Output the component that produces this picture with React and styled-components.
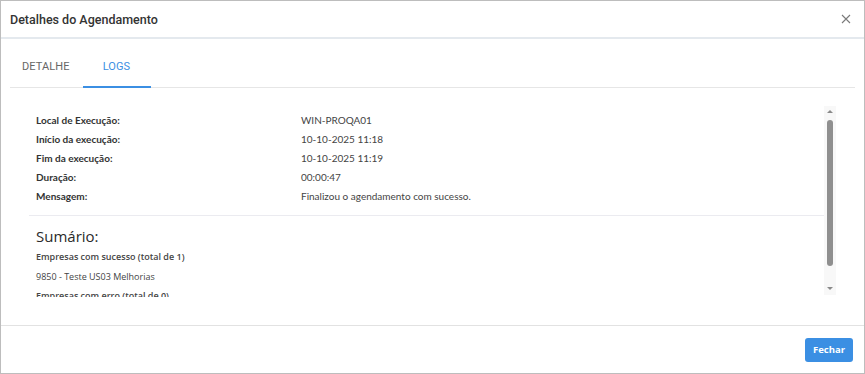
import React, { useState } from "react";
import styled, { createGlobalStyle } from "styled-components";

const GlobalStyle = createGlobalStyle`
  html, body {
    margin: 0;
    padding: 0;
    background: #ffffff;
  }
  * {
    box-sizing: border-box;
  }
`;

const infoRows = [
  { label: "Local de Execução:", value: "WIN-PROQA01" },
  { label: "Início da execução:", value: "10-10-2025 11:18" },
  { label: "Fim da execução:", value: "10-10-2025 11:19" },
  { label: "Duração:", value: "00:00:47" },
  { label: "Mensagem:", value: "Finalizou o agendamento com sucesso." },
];

const summary = [
  { text: "Empresas com sucesso (total de 1)", strong: true },
  { text: "9850 - Teste US03 Melhorias" },
  { text: "Empresas com erro (total de 0)", strong: true },
];

const tabs = [
  { key: "detalhe", label: "DETALHE", pad: "0 13px 0 12px" },
  { key: "logs", label: "LOGS", pad: "0 21px 0 20px" },
];

const App = () => {
  const [active, setActive] = useState("logs");

  return (
    <>
      <GlobalStyle />
      <Modal>
        <Header>
          <Title>Detalhes do Agendamento</Title>
          <CloseButton aria-label="Fechar">
            <svg width="10" height="10" viewBox="0 0 10 10">
              <path d="M1 1 L9 9 M9 1 L1 9" stroke="#7a7a7a" strokeWidth="1.1" fill="none" />
            </svg>
          </CloseButton>
        </Header>

        <TabBar>
          {tabs.map((t) => (
            <Tab
              key={t.key}
              $active={active === t.key}
              $pad={t.pad}
              onClick={() => setActive(t.key)}
            >
              {t.label}
            </Tab>
          ))}
        </TabBar>

        <Body>
          <ScrollPane>
            <Content>
              <InfoList>
                {infoRows.map((r) => (
                  <InfoRow key={r.label}>
                    <Label>{r.label}</Label>
                    <Value>{r.value}</Value>
                  </InfoRow>
                ))}
              </InfoList>
              <Divider />
              <Summary>
                <SummaryTitle>Sumário:</SummaryTitle>
                {summary.map((s) => (
                  <SummaryLine key={s.text} $strong={s.strong}>
                    {s.text}
                  </SummaryLine>
                ))}
              </Summary>
            </Content>
            <ScrollTrack>
              <Arrow $dir="up" />
              <Thumb />
              <Arrow $dir="down" />
            </ScrollTrack>
          </ScrollPane>
        </Body>

        <Footer>
          <PrimaryButton>Fechar</PrimaryButton>
        </Footer>
      </Modal>
    </>
  );
};

const Modal = styled.div`
  width: 865px;
  height: 374px;
  border: 1px solid #bdbdbd;
  background: #fff;
  display: flex;
  flex-direction: column;
  overflow: hidden;
`;

const Header = styled.div`
  height: 38px;
  border-bottom: 2px solid #e4e9ee;
  display: flex;
  align-items: center;
  justify-content: space-between;
  padding: 0 12px 0 9px;
`;

const Title = styled.span`
  font-family: Roboto, "Liberation Sans", sans-serif;
  font-size: 12.5px;
  font-weight: 500;
  color: #333;
`;

const CloseButton = styled.button`
  border: none;
  background: transparent;
  padding: 0;
  width: 12px;
  height: 12px;
  display: flex;
  align-items: center;
  justify-content: center;
  cursor: pointer;
`;

const TabBar = styled.div`
  margin: 8px 9px 0;
  height: 41px;
  display: flex;
  border-bottom: 1px solid #e6e6e6;
`;

const Tab = styled.div`
  padding: ${(p) => p.$pad};
  display: flex;
  align-items: center;
  font-family: Roboto, "Liberation Sans", sans-serif;
  font-size: 11px;
  letter-spacing: 0.1px;
  color: ${(p) => (p.$active ? "#3b8fe3" : "#666")};
  border-bottom: 2px solid ${(p) => (p.$active ? "#3b8fe3" : "transparent")};
  margin-bottom: -1px;
  cursor: pointer;
`;

const Body = styled.div`
  flex: 1;
  padding: 16px 28px 0;
`;

const ScrollPane = styled.div`
  height: 193px;
  display: flex;
`;

const Content = styled.div`
  flex: 1;
  overflow: hidden;
`;

const InfoList = styled.div`
  padding: 6px 0 0 7px;
`;

const InfoRow = styled.div`
  display: grid;
  grid-template-columns: 265px 1fr;
  height: 19px;
  align-items: center;
  font-family: Lato, "Open Sans", sans-serif;
  font-size: 10px;
`;

const Label = styled.span`
  font-weight: 700;
  color: #333;
`;

const Value = styled.span`
  color: #444;
`;

const Divider = styled.div`
  height: 1px;
  background: #ebebf0;
  margin-top: 10px;
`;

const Summary = styled.div`
  padding: 9px 0 0 7px;
`;

const SummaryTitle = styled.div`
  font-family: "Open Sans", sans-serif;
  font-size: 15px;
  line-height: 22px;
  color: #2a2a2a;
`;

const SummaryLine = styled.div`
  font-family: "Open Sans", sans-serif;
  font-size: 9px;
  line-height: 19.5px;
  font-weight: ${(p) => (p.$strong ? 600 : 400)};
  color: #444;
  &:first-of-type {
    margin-top: 1px;
  }
`;

const ScrollTrack = styled.div`
  width: 12px;
  margin: 2px 0 2px;
  background: #f8f8f8;
  display: flex;
  flex-direction: column;
  align-items: center;
`;

const Arrow = styled.div`
  width: 0;
  height: 0;
  border-left: 3px solid transparent;
  border-right: 3px solid transparent;
  ${(p) =>
    p.$dir === "up"
      ? "border-bottom: 3px solid #8a8a8a; margin: 4px 0 7px;"
      : "border-top: 3px solid #8a8a8a; margin: auto 0 5px;"}
`;

const Thumb = styled.div`
  width: 6px;
  height: 146px;
  border-radius: 3px;
  background: #8f8f8f;
`;

const Footer = styled.div`
  height: 48px;
  border-top: 1px solid #e2e2e2;
  display: flex;
  align-items: center;
  justify-content: flex-end;
  padding: 0 11px;
`;

const PrimaryButton = styled.button`
  width: 48px;
  height: 24px;
  border: none;
  border-radius: 3px;
  background: #3b8fe3;
  color: #fff;
  font-family: "Open Sans", sans-serif;
  font-weight: 700;
  font-size: 9.5px;
  cursor: pointer;
`;

export default App;
